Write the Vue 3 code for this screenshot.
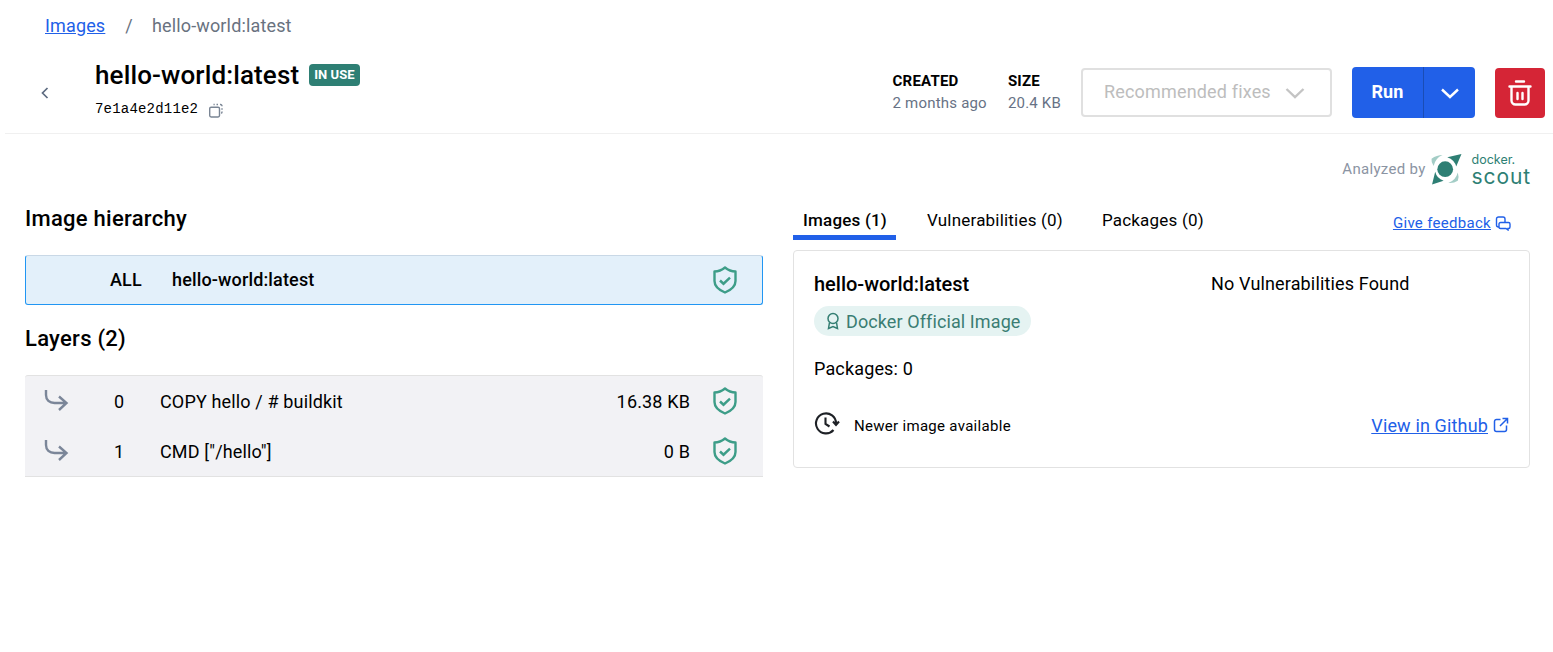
<template>
  <div class="page">
    <nav class="crumbs">
      <a class="link" href="#">Images</a>
      <span class="sep">/</span>
      <span class="crumb-current">hello-world:latest</span>
    </nav>

    <header class="head">
      <button class="back" aria-label="Back">
        <svg width="24" height="24" viewBox="0 0 24 24" fill="none" stroke="#5d6b80" stroke-width="1.7"><path d="M14.5 7 9.5 12l5 5" /></svg>
      </button>
      <div class="title-block">
        <div class="title-row">
          <h1>hello-world:latest</h1>
          <span class="chip">IN USE</span>
        </div>
        <div class="id-row">
          <code>7e1a4e2d11e2</code>
          <svg class="copy" width="16" height="16" viewBox="0 0 16 16" fill="none" stroke="#7a8594" stroke-width="1.4">
            <rect x="1.7" y="5.2" width="9.800" height="9.800" rx="1.400" />
            <path d="M5.500 2.500h1.200M8.500 2.500h1.500M12 2.500h.5a1.500 1.500 0 0 1 1.500 1.500v.3M14 6.300v1.500M14 9.500v.5a1.500 1.500 0 0 1-.8 1.300" />
          </svg>
        </div>
      </div>
      <div class="meta">
        <div class="meta-item">
          <strong>CREATED</strong>
          <span>2 months ago</span>
        </div>
        <div class="meta-item">
          <strong>SIZE</strong>
          <span>20.4 KB</span>
        </div>
      </div>
      <button class="fixes">
        <span class="nudge">Recommended fixes</span>
        <svg width="24" height="24" viewBox="0 0 24 24" fill="none" stroke="#c4c4c4" stroke-width="2.400"><path d="m3.500 8 8.500 8 8.500-8" /></svg>
      </button>
      <div class="run">
        <span class="run-main"><span class="nudge">Run</span></span>
        <span class="run-caret">
          <svg width="24" height="24" viewBox="0 0 24 24" fill="none" stroke="#fff" stroke-width="2.400"><path d="m4 8.500 8 7.500 8-7.500" /></svg>
        </span>
      </div>
      <button class="delete" aria-label="Delete">
        <svg width="28" height="28" viewBox="0 0 28 28" fill="none" stroke="#fff" stroke-width="2.400" stroke-linecap="round">
          <path d="M10 2.500h8M3.500 7.500h21M5.500 8v13.500a4 4 0 0 0 4 4h9a4 4 0 0 0 4-4V8M11.500 14v6M16.500 14v6" />
        </svg>
      </button>
    </header>

    <div class="analyzed">
      <span>Analyzed by</span>
      <svg class="scout-mark" width="31" height="31" viewBox="1.500 0 29.500 29.500">
        <circle cx="15" cy="14.500" r="7.500" fill="#2e7f74" />
        <path d="M30.500 0 L25.500 12 Q24 5.500 17 3 Z" fill="#2e7f74" />
        <path d="M2.500 29 L5.500 17 Q7 23.500 13.500 25.500 Z" fill="#2e7f74" />
        <path d="M2 4.500 Q7 1 12.500 1 Q5.500 4 4 11.500 Q1.500 8 2 4.500Z" fill="#a3cdc6" />
        <path d="M27 17.500 Q28.500 22 27 25.500 Q23 28 18 27.500 Q25 25 27 17.500Z" fill="#a3cdc6" />
      </svg>
      <div class="scout-word">
        <span class="w-docker">docker.</span>
        <span class="w-scout">scout</span>
      </div>
    </div>

    <main class="columns">
      <section class="left">
        <h2 class="hier-title">Image hierarchy</h2>
        <div class="all-row">
          <span class="all-label nudge-row">ALL</span>
          <span class="all-name nudge-row">hello-world:latest</span>
          <svg class="shield" width="24" height="28" viewBox="0 0 24 28" fill="none" stroke="#3d9d88" stroke-width="2.400">
            <path d="M12 1.500C15 4 19 5.500 22.500 5.500V15C22.500 20 18 24 12 26.500 6 24 1.500 20 1.500 15V5.500C5 5.500 9 4 12 1.500Z" stroke-linejoin="round" />
            <path d="m7 14.500 3.500 3.200 6.500-6" stroke-width="2.500" />
          </svg>
        </div>
        <h2 class="layers-title">Layers (2)</h2>
        <div class="layers">
          <div v-for="l in layers" :key="l.i" class="layer">
            <svg class="turn" width="26" height="24" viewBox="0 0 26 24" fill="none" stroke="#7b8699" stroke-width="2.400">
              <path d="M3 1v5c0 5 3.500 8 8.500 8H23M16 7.500l7.500 6.500-7.500 7" />
            </svg>
            <span class="layer-i">{{ l.i }}</span>
            <span class="layer-cmd">{{ l.cmd }}</span>
            <span class="layer-size">{{ l.size }}</span>
            <svg class="shield" width="24" height="28" viewBox="0 0 24 28" fill="none" stroke="#3d9d88" stroke-width="2.400">
              <path d="M12 1.500C15 4 19 5.500 22.500 5.500V15C22.500 20 18 24 12 26.500 6 24 1.500 20 1.500 15V5.500C5 5.500 9 4 12 1.500Z" stroke-linejoin="round" />
              <path d="m7 14.500 3.500 3.200 6.500-6" stroke-width="2.500" />
            </svg>
          </div>
        </div>
      </section>

      <section class="right">
        <div class="tabs">
          <span class="tab active">Images (1)</span>
          <span class="tab tab-mid">Vulnerabilities (0)</span>
          <span class="tab">Packages (0)</span>
          <a class="feedback" href="#">
            <span class="link">Give feedback</span>
            <svg width="16" height="16" viewBox="0 0 16 16" fill="none" stroke="#2160e8" stroke-width="1.400">
              <path d="M10 7V4a2 2 0 0 0-2-2H3.500a2 2 0 0 0-2 2v6a2 2 0 0 0 2 2H4" />
              <path d="M5.500 7.500h8A1.500 1.500 0 0 1 15 9v3a1.500 1.500 0 0 1-1.500 1.500H13V15l-2-1.500H5.500A1.500 1.500 0 0 1 4 12V9a1.500 1.500 0 0 1 1.500-1.500Z" />
            </svg>
          </a>
        </div>
        <div class="card">
          <div class="card-top">
            <div>
              <div class="card-name">hello-world:latest</div>
              <div class="official">
                <svg width="16" height="18" viewBox="0 0 16 18" fill="none" stroke="#337e72" stroke-width="1.500">
                  <circle cx="8" cy="6.500" r="5" />
                  <path d="M4.500 10.500 3.500 16.500 8 14.500l4.500 2-1-6" />
                </svg>
                <span>Docker Official Image</span>
              </div>
            </div>
            <div class="no-vuln">No Vulnerabilities Found</div>
          </div>
          <div class="packages">Packages: 0</div>
          <div class="card-foot">
            <svg class="clock" width="26" height="26" viewBox="0 0 26 26" fill="none" stroke="#1e2126" stroke-width="2.100">
              <path d="M19.500 19A10 10 0 1 1 22 12.500" />
              <path d="M11.500 6.500V13l4 2.500" />
              <path d="m19 10.500 3 3.500 3-3.500" />
            </svg>
            <span class="newer">Newer image available</span>
            <a class="github" href="#">
              <span class="link">View in Github</span>
              <svg width="16" height="16" viewBox="0 0 16 16" fill="none" stroke="#2160e8" stroke-width="1.500">
                <path d="M7.500 2.500H3.500a2 2 0 0 0-2 2v8a2 2 0 0 0 2 2h8a2 2 0 0 0 2-2v-4M9.500 1.500h5v5M14.500 1.500 7 9" />
              </svg>
            </a>
          </div>
        </div>
      </section>
    </main>
  </div>
</template>

<script setup>
const layers = [
  { i: 0, cmd: 'COPY hello / # buildkit', size: '16.38 KB' },
  { i: 1, cmd: 'CMD ["/hello"]', size: '0 B' },
]
</script>

<style>
body { background: #fff; }
</style>

<style scoped>
.page {
  font-family: Roboto, "Noto Sans", sans-serif;
  color: #000;
  width: 1553px;
  height: 652px;
  overflow: hidden;
  font-size: 16px;
  letter-spacing: .15px;
}
.link { color: #2160e8; text-decoration: underline; }
.nudge { display: block; margin-bottom: 2px; }
.crumbs {
  display: flex;
  align-items: center;
  height: 50px;
  padding-left: 45px;
  font-size: 18px;
  color: #69727f;
}
.crumbs .sep { margin: 0 19px 0 20px; }
.head {
  display: flex;
  align-items: center;
  height: 82px;
  margin: 2px 0 0 5px;
  border-bottom: 1px solid #f0f0f0;
  box-sizing: border-box;
  padding-right: 8px;
}
.back {
  width: 24px; height: 24px; padding: 0; border: 0; background: none;
  margin: 0 0 0 28px;
  display: flex;
}
.title-block { margin: 0 0 7px 38px; flex: 1; }
.title-row { display: flex; align-items: center; gap: 10px; }
h1 { margin: 0; font-size: 26px; font-weight: 500; line-height: 32px; letter-spacing: .13px; }
.chip {
  background: #2e7f74; color: #fff; font-size: 13px; font-weight: 700;
  border-radius: 4px; padding: 0 5px; line-height: 22px; letter-spacing: .05px;
}
.id-row { display: flex; align-items: center; gap: 10px; margin-top: 8px; height: 20px; }
code { font-family: "Liberation Mono", monospace; font-size: 14px; letter-spacing: .2px; line-height: 20px; }
.copy { margin-top: 2px; }
.meta { display: flex; gap: 21px; margin: 0 20px 2px 0; }
.meta-item { display: flex; flex-direction: column; font-size: 15px; letter-spacing: .2px; }
.meta-item strong { font-weight: 700; line-height: 22px; }
.meta-item span { color: #677285; line-height: 22px; }
.fixes {
  display: flex; align-items: center; justify-content: space-between;
  width: 251px; height: 49px; box-sizing: border-box;
  border: 2px solid #e0e0e0; border-radius: 4px; background: #fff;
  padding: 0 23px 0 21px; margin-right: 20px;
  font: 400 18px Roboto, sans-serif; color: #bdbdbd; letter-spacing: .17px;
}
.run {
  display: flex; width: 123px; height: 51px; border-radius: 4px;
  background: #2160e8; color: #fff; font-size: 18px; font-weight: 700;
  margin-right: 20px; letter-spacing: .1px;
}
.run-main { width: 71px; display: flex; align-items: center; justify-content: center; }
.run-caret {
  flex: 1; border-left: 1px solid #1a4db5;
  display: flex; align-items: center; justify-content: center;
}
.delete {
  width: 50px; height: 50px; padding: 0; border: 0; border-radius: 4px;
  background: #d52536; display: flex; align-items: center; justify-content: center;
}
.analyzed {
  display: flex; align-items: center; justify-content: flex-end;
  height: 44px; margin-top: 13px; padding-right: 22px; color: #8b94a3; font-size: 15px; letter-spacing: .3px;
}
.scout-mark { margin: 0 10px 0 5px; flex: none; }
.scout-word { display: flex; flex-direction: column; color: #2e7f74; font-family: Inter, Roboto, sans-serif; letter-spacing: 0; margin-top: 2px; }
.w-docker { font-size: 12.5px; line-height: 13px; }
.w-scout { font-size: 21px; line-height: 22px; letter-spacing: .9px; }
.columns {
  display: flex; gap: 30px; padding: 0 23px 0 25px; margin-top: 12px;
}
.left { width: 738px; }
.right { width: 737px; }
h2 { margin: 0; font-size: 22px; font-weight: 500; line-height: 30px; letter-spacing: .27px; }
.hier-title { padding-top: 2px; line-height: 28px; }
.all-row {
  display: flex; align-items: center; height: 50px; box-sizing: border-box; margin-top: 22px;
  background: #e3f0fa; border: 1px solid #2196f3; border-top-color: #c9d8e6; border-radius: 3px;
  padding-right: 25px; font-size: 18px; font-weight: 500;
}
.nudge-row { margin-bottom: 2px; }
.all-label { margin-left: 84px; width: 62px; }
.all-name { flex: 1; }
.layers-title { margin-top: 19px; }
.layers {
  margin-top: 21px; background: #f2f2f5;
  border-top: 1px solid #e2e2e2; border-bottom: 1px solid #e2e2e2; border-radius: 3px 3px 0 0;
  height: 102px; box-sizing: border-box;
}
.layer { display: flex; align-items: center; height: 50px; padding: 0 26px 0 18px; font-size: 18px; }
.turn { flex: none; }
.layer-i { width: 91px; padding-left: 45px; box-sizing: border-box; }
.layer-cmd { flex: 1; }
.layer-size { margin-right: 23px; }
.tabs { display: flex; align-items: flex-start; height: 40px; font-size: 17px; letter-spacing: .2px; }
.tab { padding: 0 10px; line-height: 32px; height: 36px; box-sizing: border-box; margin-right: 20px; margin-top: 1px; white-space: nowrap; }
.tab-mid { margin-right: 19px; }
.tab.active { font-weight: 500; border-bottom: 5px solid #2160e8; width: 103px; padding-right: 0; margin-right: 21px; }
.feedback { margin-left: auto; display: flex; align-items: center; gap: 4px; font-size: 15px; text-decoration: none; margin-top: 11px; margin-right: 19px; letter-spacing: .3px; }
.card {
  border: 1px solid #e2e2e2; border-radius: 4px; height: 218px; box-sizing: border-box; margin-top: 7px;
  padding: 20px;
}
.card-top { display: flex; }
.card-top > div:first-child { width: 397px; }
.card-name { font-size: 20px; font-weight: 500; line-height: 26px; letter-spacing: 0; }
.official {
  display: inline-flex; align-items: center; gap: 5px; height: 30px; padding: 0 10px 0 11px; margin-top: 9px;
  background: #e5f3f2; border-radius: 15px; color: #3a7d72; font-size: 18px; letter-spacing: .1px;
}
.no-vuln { font-size: 18px; line-height: 26px; }
.packages { margin-top: 20px; font-size: 18px; line-height: 26px; }
.card-foot { display: flex; align-items: center; margin-top: 29px; }
.clock { margin-bottom: 4px; flex: none; }
.newer { margin-left: 14px; font-size: 15px; letter-spacing: .3px; }
.github { margin-left: auto; display: flex; align-items: center; gap: 5px; font-size: 18px; text-decoration: none; margin-bottom: 2px; }
</style>
